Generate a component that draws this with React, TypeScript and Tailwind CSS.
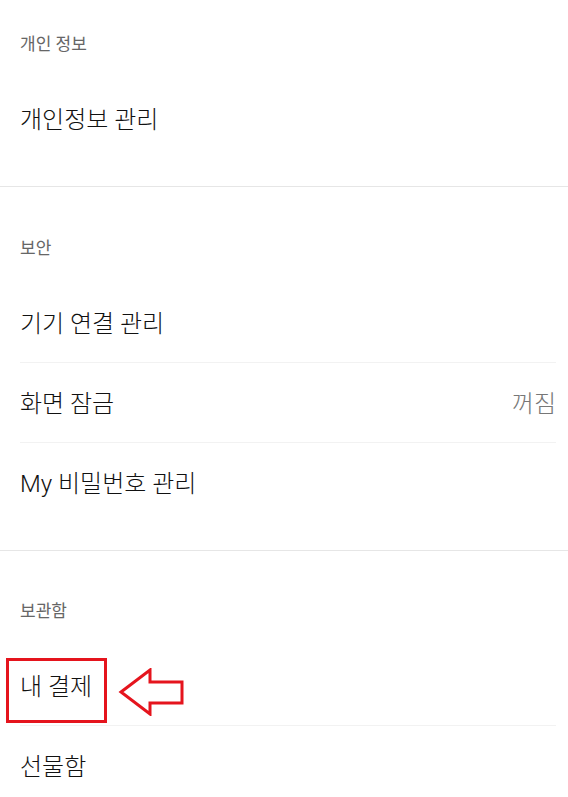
import React from "react";

const font = { fontFamily: '"Roboto", "Noto Sans CJK KR", sans-serif' };

function Header({ label, pt }: { label: string; pt: string }) {
  return (
    <div className={`${pt} pb-[25px] pl-[20px] pr-[12px]`}>
      <div className="h-[20px] leading-[20px] text-[17px] text-[#666666]">{label}</div>
    </div>
  );
}

function Row({
  label,
  value,
  divider,
  boxed,
}: {
  label: string;
  value?: string;
  divider?: boolean;
  boxed?: boolean;
}) {
  return (
    <div className="pl-[20px] pr-[12px]">
      <div
        className={`relative flex h-[80px] items-center justify-between pt-[2px] ${
          divider ? "border-b border-[#f2f2f2]" : ""
        }`}
      >
        <span className="text-[24px] leading-[30px] font-light text-[#111111]">{label}</span>
        {value && <span className="text-[24px] leading-[30px] font-light text-[#777777]">{value}</span>}
        {boxed && (
          <>
            <div className="absolute left-[-14px] top-[12px] h-[65px] w-[101px] border-[3px] border-[#e5141d]" />
            <svg
              className="absolute left-[98px] top-[22px]"
              width="66"
              height="48"
              viewBox="0 0 66 48"
            >
              <polygon
                points="3,24 32,2 32,14 64,14 64,35 32,35 32,46"
                fill="#ffffff"
                stroke="#e5141d"
                strokeWidth="3"
                strokeLinejoin="miter"
              />
            </svg>
          </>
        )}
      </div>
    </div>
  );
}

export default function App() {
  return (
    <div className="w-[568px] h-[797px] overflow-hidden bg-white" style={font}>
      <Header label="개인 정보" pt="pt-[34px]" />
      <Row label="개인정보 관리" />
      <div className="h-[27px]" />
      <div className="h-px bg-[#e6e6e6]" />

      <Header label="보안" pt="pt-[51px]" />
      <Row label="기기 연결 관리" divider />
      <Row label="화면 잠금" value="꺼짐" divider />
      <Row label="My 비밀번호 관리" />
      <div className="h-[27px]" />
      <div className="h-px bg-[#e6e6e6]" />

      <Header label="보관함" pt="pt-[50px]" />
      <Row label="내 결제" divider boxed />
      <Row label="선물함" />
    </div>
  );
}
